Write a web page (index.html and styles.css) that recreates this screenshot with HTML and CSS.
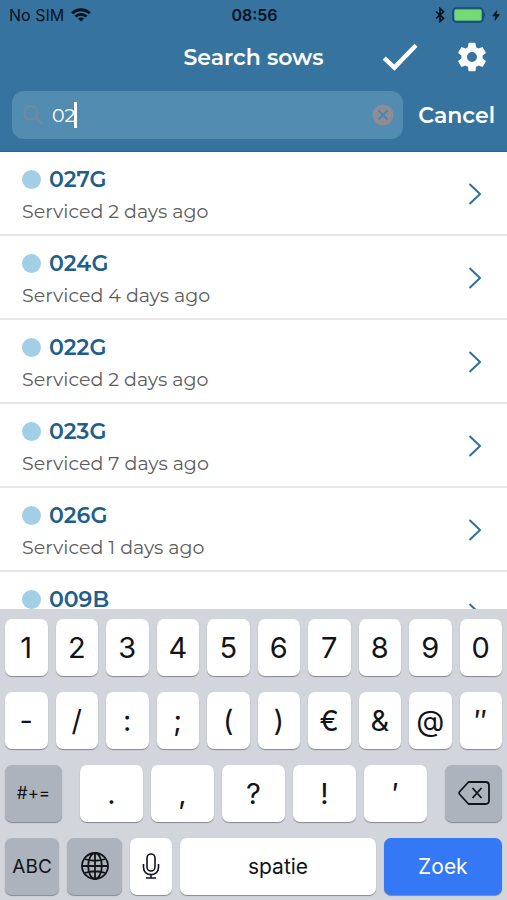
FILE: index.html
```html
<!DOCTYPE html>
<html lang="en">
<head>
<meta charset="utf-8">
<meta name="viewport" content="width=device-width, initial-scale=1">
<title>Search sows</title>
<link rel="stylesheet" href="styles.css">
</head>
<body>
<div class="app">
  <header class="header">
    <div class="status">
      <div class="status-left">
        <span>No SIM</span>
        <svg width="20" height="14" viewBox="0 0 20 14" fill="none" stroke="#05121f" stroke-width="2.8" aria-hidden="true"><path d="M1.2 5.2C6 0.6 14 0.6 18.8 5.2"/><path d="M4.4 8.6C7.6 5.6 12.4 5.6 15.6 8.6"/><path d="M10 13.6 6.9 10.6C8.6 9 11.4 9 13.1 10.6Z" fill="#05121f" stroke="none"/></svg>
      </div>
      <time class="clock">08:56</time>
      <div class="status-right">
        <svg width="10" height="16" viewBox="0 0 10 16" fill="none" stroke="#05121f" stroke-width="1.6" aria-hidden="true"><path d="M1 4.5 8.6 11.3 5 14.6V1.4L8.6 4.7 1 11.5"/></svg>
        <svg width="33" height="16" viewBox="0 0 33 16" aria-hidden="true"><rect x="1" y="1" width="30" height="14" rx="3.5" fill="none" stroke="#174a70" stroke-width="1.6"/><rect x="2.5" y="2.5" width="27" height="11" rx="1.5" fill="#76da72"/><path d="M32 5.5C33.4 6.5 33.4 9.5 32 10.5Z" fill="#174a70"/></svg>
        <svg width="8" height="13" viewBox="0 0 8 12" fill="#05121f" aria-hidden="true"><path d="M5.4 0 0 6.8H3.4L2.4 12 8 4.8H4.4Z"/></svg>
      </div>
    </div>
    <div class="titlebar">
      <h1>Search sows</h1>
      <div class="actions">
        <button type="button" aria-label="Confirm"><svg width="36" height="28" viewBox="0 0 36 28" fill="none" stroke="#fff" stroke-width="4.4"><path d="M2.2 15.2 12.4 24.6 34 2.2"/></svg></button>
        <button type="button" aria-label="Settings"><svg width="34" height="34" viewBox="0 0 24 24" fill="#fff"><path d="M19.43 12.98c.04-.32.07-.64.07-.98s-.03-.66-.07-.98l2.11-1.65c.19-.15.24-.42.12-.64l-2-3.46c-.12-.22-.39-.3-.61-.22l-2.49 1c-.52-.4-1.08-.73-1.69-.98l-.38-2.65C14.46 2.18 14.25 2 14 2h-4c-.25 0-.46.18-.49.42l-.38 2.65c-.61.25-1.17.59-1.69.98l-2.49-1c-.23-.09-.49 0-.61.22l-2 3.46c-.13.22-.07.49.12.64l2.11 1.65c-.04.32-.07.65-.07.98s.03.66.07.98l-2.11 1.65c-.19.15-.24.42-.12.64l2 3.46c.12.22.39.3.61.22l2.49-1c.52.4 1.08.73 1.69.98l.38 2.65c.03.24.24.42.49.42h4c.25 0 .46-.18.49-.42l.38-2.65c.61-.25 1.17-.59 1.69-.98l2.49 1c.23.09.49 0 .61-.22l2-3.46c.12-.22.07-.49-.12-.64l-2.11-1.65zM12 15.5c-1.93 0-3.5-1.57-3.5-3.5s1.57-3.5 3.5-3.5 3.5 1.57 3.5 3.5-1.57 3.5-3.5 3.5z"/></svg></button>
      </div>
    </div>
    <form class="search" role="search">
      <div class="field">
        <svg width="20" height="20" viewBox="0 0 20 20" fill="none" stroke="#7d8698" stroke-width="1.6" aria-hidden="true"><circle cx="7.8" cy="7.8" r="6.8"/><path d="M12.8 12.8 19 19" stroke-width="2.2"/></svg>
        <input type="text" value="02" aria-label="Search sows"><span class="caret"></span>
        <button class="clear" type="button" aria-label="Clear"><svg width="22" height="22" viewBox="0 0 22 22"><circle cx="11" cy="11" r="10.5" fill="#8f8c93"/><path d="M6.5 6.5 15.5 15.5M15.5 6.5 6.5 15.5" stroke="#4a85ac" stroke-width="1.8"/></svg></button>
      </div>
      <button class="cancel" type="button">Cancel</button>
    </form>
  </header>

  <main class="results">
    <ul>
      <li><a href="#027G"><span class="sow"><span class="name"><i class="dot"></i>027G</span><span class="info">Serviced 2 days ago</span></span><svg class="chevron" viewBox="0 0 14 24"><path d="M1.5 2 12 12 1.5 22"/></svg></a></li>
      <li><a href="#024G"><span class="sow"><span class="name"><i class="dot"></i>024G</span><span class="info">Serviced 4 days ago</span></span><svg class="chevron" viewBox="0 0 14 24"><path d="M1.5 2 12 12 1.5 22"/></svg></a></li>
      <li><a href="#022G"><span class="sow"><span class="name"><i class="dot"></i>022G</span><span class="info">Serviced 2 days ago</span></span><svg class="chevron" viewBox="0 0 14 24"><path d="M1.5 2 12 12 1.5 22"/></svg></a></li>
      <li><a href="#023G"><span class="sow"><span class="name"><i class="dot"></i>023G</span><span class="info">Serviced 7 days ago</span></span><svg class="chevron" viewBox="0 0 14 24"><path d="M1.5 2 12 12 1.5 22"/></svg></a></li>
      <li><a href="#026G"><span class="sow"><span class="name"><i class="dot"></i>026G</span><span class="info">Serviced 1 days ago</span></span><svg class="chevron" viewBox="0 0 14 24"><path d="M1.5 2 12 12 1.5 22"/></svg></a></li>
      <li><a href="#009B"><span class="sow"><span class="name"><i class="dot"></i>009B</span></span><svg class="chevron" viewBox="0 0 14 24"><path d="M1.5 2 12 12 1.5 22"/></svg></a></li>
    </ul>
  </main>

  <section class="keyboard" aria-label="Keyboard">
    <div class="keys">
      <button type="button">1</button><button type="button">2</button><button type="button">3</button><button type="button">4</button><button type="button">5</button><button type="button">6</button><button type="button">7</button><button type="button">8</button><button type="button">9</button><button type="button">0</button>
    </div>
    <div class="keys">
      <button type="button">-</button><button type="button">/</button><button type="button">:</button><button type="button">;</button><button type="button">(</button><button type="button">)</button><button type="button">€</button><button type="button">&amp;</button><button type="button">@</button><button type="button">″</button>
    </div>
    <div class="keys keys-punct">
      <button class="dark symbols" type="button">#+=</button>
      <div class="keys">
        <button type="button">.</button><button type="button">,</button><button type="button">?</button><button type="button">!</button><button type="button">′</button>
      </div>
      <button class="dark" type="button" aria-label="Delete"><svg width="32" height="24" viewBox="0 0 32 24" fill="none" stroke="#111419" stroke-width="1.8" stroke-linejoin="round"><path d="M10.5 1H27.5Q31 1 31 4.5V19.5Q31 23 27.5 23H10.5L1.8 13.5Q0.5 12 1.8 10.5Z"/><path d="M14.5 7 23.5 17M23.5 7 14.5 17"/></svg></button>
    </div>
    <div class="keys keys-bottom">
      <button class="dark word-small" type="button">ABC</button>
      <button class="dark" type="button" aria-label="Switch language"><svg width="28" height="28" viewBox="0 0 28 28" fill="none" stroke="#111419" stroke-width="1.8"><circle cx="14" cy="14" r="13"/><ellipse cx="14" cy="14" rx="6.8" ry="13"/><path d="M14 1V27M1 14H27M3.5 7Q14 10.5 24.5 7M3.5 21Q14 17.5 24.5 21"/></svg></button>
      <button type="button" aria-label="Dictate"><svg width="18" height="26" viewBox="0 0 18 26" fill="none" stroke="#111419" stroke-width="1.6"><rect x="5" y="1" width="8" height="17" rx="4"/><path d="M1.5 11V14.5C1.5 24 16.5 24 16.5 14.5V11M9 21.5V25M4 25H14"/></svg></button>
      <button class="word" type="button">spatie</button>
      <button class="word primary" type="button">Zoek</button>
    </div>
  </section>
</div>
</body>
</html>
```
FILE: styles.css
```css
* {
  box-sizing: border-box;
}

body {
  margin: 0;
  font-family: Montserrat, Inter, sans-serif;
}

button,
input {
  margin: 0;
  padding: 0;
  border: 0;
  background: none;
  color: inherit;
  font: inherit;
  outline: 0;
}

svg {
  display: block;
  flex: none;
}

.app {
  display: flex;
  flex-direction: column;
  height: 100vh;
  overflow: hidden;
}

.header {
  flex: none;
  padding-bottom: 12px;
  border-bottom: 1px solid #2b6593;
  background: #37739f;
  color: #fff;
}

.status,
.titlebar {
  display: grid;
  grid-template-columns: 1fr auto 1fr;
  align-items: center;
}

.status {
  height: 30px;
  padding: 0 7px 0 9px;
  color: #05121f;
  font-family: Inter, sans-serif;
  font-size: 16px;
}

.status-left,
.status-right {
  display: flex;
  align-items: center;
  gap: 7px;
}

.status-right {
  justify-content: flex-end;
}

.clock {
  font-weight: 600;
}

.titlebar {
  height: 54px;
  padding: 0 18px;
}

h1 {
  grid-column: 2;
  margin: 0;
  font-size: 22px;
  font-weight: 600;
}

.actions {
  display: flex;
  align-items: center;
  justify-content: flex-end;
  gap: 37px;
}

.search {
  display: flex;
  gap: 15px;
  margin-top: 7px;
  padding: 0 12px;
}

.field {
  display: flex;
  flex: 1;
  align-items: center;
  min-width: 0;
  height: 48px;
  padding: 0 9px 0 11px;
  border-radius: 12px;
  background: #528cb1;
}

.field input {
  width: 22px;
  margin-left: 9px;
  font-size: 19px;
}

.caret {
  width: 3px;
  height: 26px;
  background: #fff;
}

.clear {
  margin-left: auto;
}

.cancel {
  font-size: 22px;
  font-weight: 600;
}

.results {
  flex: 1;
  min-height: 0;
  overflow: hidden;
  background: #fff;
}

ul {
  margin: 0;
  padding: 0;
  list-style: none;
}

li a {
  display: flex;
  justify-content: space-between;
  height: 84px;
  padding: 11px 25px 0 22px;
  border-bottom: 2px solid #e6e6e8;
  color: #5c5c5c;
  text-decoration: none;
}

.name {
  display: flex;
  align-items: center;
  gap: 8px;
  height: 33px;
  color: #225e8c;
  font-size: 22px;
  font-weight: 600;
}

.dot {
  width: 19px;
  height: 19px;
  border-radius: 50%;
  background: #a2cfe6;
}

.info {
  display: block;
  font-size: 19px;
  line-height: 32px;
}

.chevron {
  width: 14px;
  height: 24px;
  margin-top: 19px;
  fill: none;
  stroke: #2f6f9c;
  stroke-width: 2;
}

.keyboard {
  display: flex;
  flex: none;
  flex-direction: column;
  gap: 16px;
  padding: 10px 5px 5px;
  background: #d2d5db;
  color: #111419;
  font-family: Inter, sans-serif;
}

.keys {
  display: grid;
  grid-auto-columns: minmax(0, 1fr);
  grid-auto-flow: column;
  gap: 8px;
}

.keys-punct {
  grid-template-columns: 57px 1fr 57px;
  gap: 18px;
}

.keys-bottom {
  grid-template-columns: 54fr 55fr 42fr 195fr 118fr;
}

.keys button {
  display: flex;
  align-items: center;
  justify-content: center;
  height: 57px;
  padding-bottom: 1px;
  border-radius: 7px;
  background: #fff;
  box-shadow: 0 1px 1px #85888e;
  font-size: 29px;
}

.keys .dark {
  background: #acb3bd;
}

.keys .symbols {
  font-size: 17px;
}

.keys .word-small {
  font-size: 19px;
}

.keys .word {
  font-size: 21px;
}

.keys .primary {
  background: #3478f6;
  color: #fff;
}
```
